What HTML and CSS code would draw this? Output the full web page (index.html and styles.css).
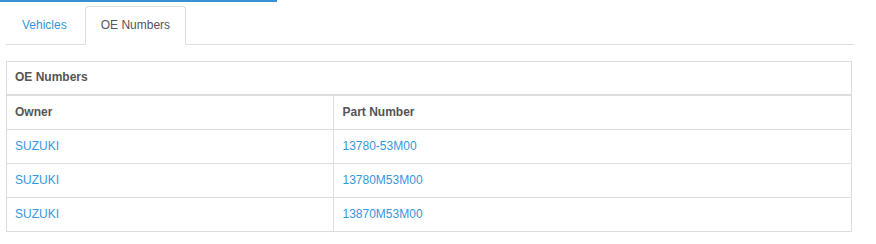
FILE: index.html
```html
<!DOCTYPE html>
<html>
<head>
<meta charset="utf-8">
<link rel="stylesheet" href="styles.css">
</head>
<body>
<div class="progress"></div>
<div class="wrap">
  <ul class="tabs">
    <li><a class="tab" href="#">Vehicles</a></li>
    <li><a class="tab active" href="#">OE Numbers</a></li>
  </ul>
  <div class="panel">
    <div class="panel-heading">OE Numbers</div>
    <table class="table">
      <thead>
        <tr><th class="col-owner">Owner</th><th>Part Number</th></tr>
      </thead>
      <tbody>
        <tr><td><a href="#">SUZUKI</a></td><td><a href="#">13780-53M00</a></td></tr>
        <tr><td><a href="#">SUZUKI</a></td><td><a href="#">13780M53M00</a></td></tr>
        <tr><td><a href="#">SUZUKI</a></td><td><a href="#">13870M53M00</a></td></tr>
      </tbody>
    </table>
  </div>
</div>
</body>
</html>
```

FILE: styles.css
```css
* { box-sizing: border-box; }
html, body { margin: 0; padding: 0; background: #fff; }
body {
  font-family: "Liberation Sans", Arial, sans-serif;
  font-size: 12px;
  line-height: 17px;
  color: #555;
}
a { color: #3498db; text-decoration: none; }
.progress {
  width: 277px;
  height: 2px;
  background: #3a8fd2;
}
.wrap {
  padding: 4px 22px 0 6px;
}
.tabs {
  list-style: none;
  margin: 0;
  padding: 0;
  display: flex;
  border-bottom: 1px solid #ddd;
}
.tabs li { margin-bottom: -1px; }
.tab {
  display: block;
  padding: 10px 15px;
  margin-right: 2px;
  border: 1px solid transparent;
  border-radius: 4px 4px 0 0;
}
.tab.active {
  color: #555;
  background: #fff;
  border-color: #ddd #ddd transparent;
}
.panel {
  margin-top: 16px;
  margin-right: 2px;
  border: 1px solid #ddd;
}
.panel-heading {
  padding: 7px 8px 8px;
  font-weight: bold;
  border-bottom: 2px solid #ddd;
}
.table {
  width: 100%;
  border-collapse: collapse;
}
.table th, .table td {
  text-align: left;
  padding: 8px;
  border-top: 1px solid #ddd;
}
.table thead th {
  border-top: 0;
  font-weight: bold;
}
.table th + th, .table td + td { border-left: 1px solid #ddd; padding-left: 9px; }
.col-owner { width: 326px; }
```
